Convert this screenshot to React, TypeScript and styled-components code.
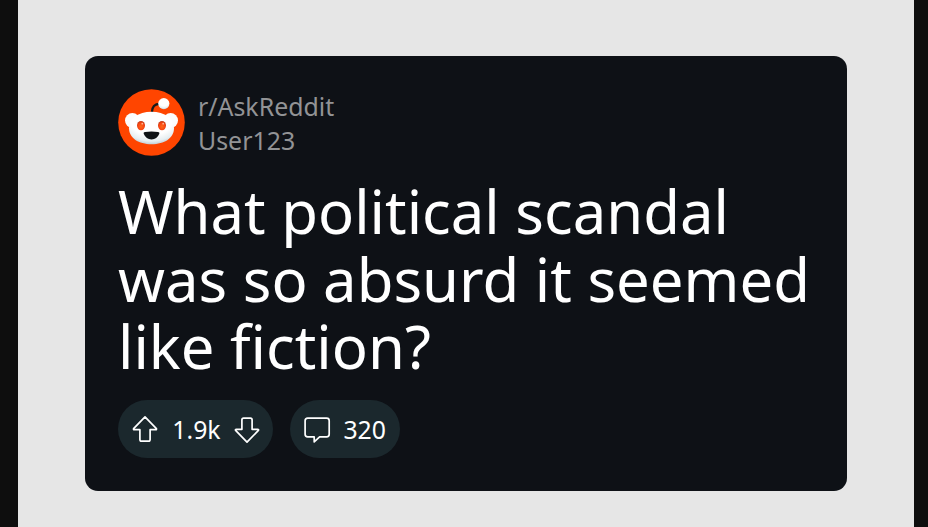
import React from 'react';
import styled, { createGlobalStyle } from 'styled-components';

const GlobalStyle = createGlobalStyle`
  * { box-sizing: border-box; }
  body { margin: 0; background: #0e0e0e; }
`;

const Stage = styled.main`
  height: 527px;
  margin: 0 14px 0 18px;
  padding: 56px 67px 0;
  background: #e6e6e6;
  font-family: 'Noto Sans', sans-serif;
`;

const Card = styled.article`
  width: 762px;
  height: 435px;
  padding: 33px;
  border-radius: 13px;
  background: #0e1116;
`;

const Header = styled.header`
  display: flex;
  gap: 13px;
  height: 67px;
`;

const Avatar = styled.svg`
  width: 67px;
  height: 67px;
  flex: none;
`;

const Byline = styled.div`
  color: #929395;
  font-size: 24.9px;
  line-height: 34px;
  white-space: nowrap;
`;

const Title = styled.h1`
  margin: 22px 0 0;
  color: #fff;
  font-size: 59.8px;
  font-weight: 400;
  line-height: 67.7px;
  white-space: nowrap;
`;

const Actions = styled.footer`
  display: flex;
  gap: 17px;
  margin-top: 19px;
`;

const Pill = styled.div<{ $width: number; $gap: number }>`
  display: flex;
  align-items: center;
  gap: ${(p) => p.$gap}px;
  width: ${(p) => p.$width}px;
  height: 58px;
  padding-left: 14px;
  border-radius: 29px;
  background: #1b282d;
  color: #fff;
  font-size: 24.8px;
`;

const Icon = styled.svg`
  width: 27px;
  height: 28px;
  flex: none;
  fill: none;
  stroke: #fff;
  stroke-width: 1.7;
  stroke-linejoin: round;
`;

const ArrowUp = () => (
  <Icon viewBox="0 0 27 28">
    <path d="M13 1.9 1.6 13.6Q1.2 14.7 2.3 14.7H7.9V24.5Q7.9 26.2 9.6 26.2H16.4Q18.1 26.2 18.1 24.5V14.7H23.7Q24.8 14.7 24.4 13.6Z" />
  </Icon>
);

const ArrowDown = () => (
  <Icon viewBox="0 0 27 28">
    <path d="M13 27.1 1.6 15.4Q1.2 14.3 2.3 14.3H7.9V4.9Q7.9 3.2 9.6 3.2H16.4Q18.1 3.2 18.1 4.9V14.3H23.7Q24.8 14.3 24.4 15.4Z" />
  </Icon>
);

const Comment = () => (
  <Icon viewBox="0 0 27 28">
    <path d="M3.7 3.2H22.6Q25.2 3.2 25.2 5.8V19.3Q25.2 21.9 22.6 21.9H15.6L10.2 26.9V21.9H3.7Q1.1 21.9 1.1 19.3V5.8Q1.1 3.2 3.7 3.2Z" />
  </Icon>
);

const Snoo = () => (
  <Avatar viewBox="0 0 67 67">
    <defs>
      <radialGradient id="fur" cx=".5" cy=".25" r=".78">
        <stop offset=".6" stopColor="#fff" />
        <stop offset=".84" stopColor="#e6eef1" />
        <stop offset="1" stopColor="#b5c3cb" />
      </radialGradient>
      <radialGradient id="eye" cx=".5" cy=".6" r=".6">
        <stop offset="0" stopColor="#ff6a18" />
        <stop offset=".65" stopColor="#f84412" />
        <stop offset="1" stopColor="#b93816" />
      </radialGradient>
    </defs>
    <circle cx="33.5" cy="33.5" r="33.3" fill="#ff4500" />
    <circle cx="14.4" cy="31.4" r="7.4" fill="#fcfdfd" />
    <circle cx="52.6" cy="31.4" r="7.4" fill="#fcfdfd" />
    <path d="M33.9 23.5C33.9 18 36.8 14.9 42 14.9" fill="none" stroke="#151a1c" strokeWidth="2.3" />
    <circle cx="45.8" cy="14.6" r="5.6" fill="url(#fur)" />
    <path d="M33.5 22.7C47 22.7 56 29.5 56 39.3C56 49 46.5 55.3 33.5 55.3S11 49 11 39.3C11 29.5 20 22.7 33.5 22.7Z" fill="url(#fur)" />
    <ellipse cx="23" cy="36.6" rx="4" ry="4.7" fill="url(#eye)" />
    <ellipse cx="44" cy="36.6" rx="4" ry="4.7" fill="url(#eye)" />
    <circle cx="24.3" cy="34.7" r=".9" fill="#ffb795" />
    <circle cx="45.2" cy="34.7" r=".9" fill="#ffb795" />
    <path d="M27 42.9Q33.5 42.2 40 42.9Q41.8 43.1 41.3 44.7Q39 50.4 33.5 50.4T25.7 44.7Q25.2 43.1 27 42.9Z" fill="#101417" />
  </Avatar>
);

export default function App() {
  return (
    <>
      <GlobalStyle />
      <Stage>
        <Card>
          <Header>
            <Snoo />
            <Byline>
              <div>r/AskReddit</div>
              <div>User123</div>
            </Byline>
          </Header>
          <Title>What political scandal<br />was so absurd it seemed<br />like fiction?</Title>
          <Actions>
            <Pill $width={155} $gap={13.3}><ArrowUp /><span>1.9k</span><ArrowDown /></Pill>
            <Pill $width={110} $gap={12.4}><Comment /><span>320</span></Pill>
          </Actions>
        </Card>
      </Stage>
    </>
  );
}
